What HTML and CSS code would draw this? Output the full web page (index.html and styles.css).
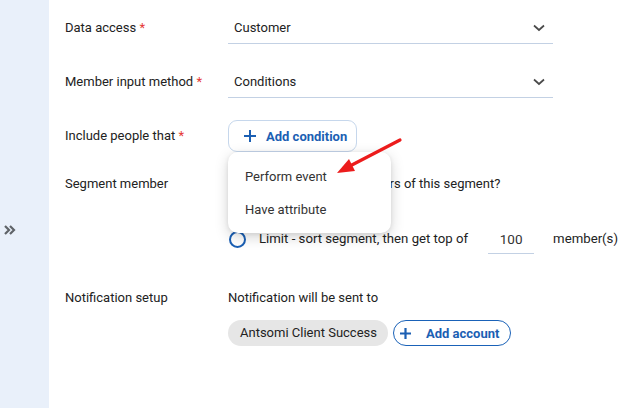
FILE: index.html
```html
<!DOCTYPE html>
<html>
<head>
<meta charset="utf-8">
<link rel="stylesheet" href="styles.css">
</head>
<body>
<div class="app">
  <aside class="sidebar">
    <svg class="expand" width="12" height="10" viewBox="0 0 12 10"><path d="M1 1l4 4-4 4M6 1l4 4-4 4" fill="none" stroke="#5f6368" stroke-width="2.2"/></svg>
  </aside>
  <main class="main">
    <div class="row">
      <div class="label">Data access <span class="req">*</span></div>
      <div class="select"><span>Customer</span><svg width="12" height="8" viewBox="0 0 12 8"><path d="M1 1.5l5 4.5 5-4.5" fill="none" stroke="#4a4a4a" stroke-width="1.7"/></svg></div>
    </div>
    <div class="row">
      <div class="label">Member input method <span class="req">*</span></div>
      <div class="select"><span>Conditions</span><svg width="12" height="8" viewBox="0 0 12 8"><path d="M1 1.5l5 4.5 5-4.5" fill="none" stroke="#4a4a4a" stroke-width="1.7"/></svg></div>
    </div>
    <div class="row">
      <div class="label">Include people that <span class="req">*</span></div>
      <div class="anchor">
        <button class="btn-cond"><svg width="12" height="12" viewBox="0 0 12 12"><path d="M6 0v12M0 6h12" stroke="#1b5fb3" stroke-width="2"/></svg><span>Add condition</span></button>
        <div class="menu">
          <div class="menu-item">Perform event</div>
          <div class="menu-item">Have attribute</div>
        </div>
      </div>
    </div>
    <div class="row row-seg">
      <div class="label">Segment member</div>
      <div class="seg">
        <div class="line">Do you want to limit members of this segment?</div>
        <div class="line radio-line"><span class="radio"></span></div>
        <div class="line radio-line limit"><span class="radio"></span><span>Limit - sort segment, then get top of</span><span class="num">100</span><span>member(s)</span></div>
      </div>
    </div>
    <div class="row row-notif">
      <div class="label">Notification setup</div>
      <div class="notif">
        <div class="line">Notification will be sent to</div>
        <div class="chips">
          <span class="chip">Antsomi Client Success</span>
          <button class="btn-acc"><svg width="11" height="11" viewBox="0 0 11 11"><path d="M5.5 0v11M0 5.5h11" stroke="#1b5fb3" stroke-width="2.2"/></svg><span>Add account</span></button>
        </div>
      </div>
    </div>
  </main>
</div>
<svg class="arrow" width="632" height="408" viewBox="0 0 632 408"><path d="M400 140L348 167" stroke="#ec1c1c" stroke-width="3.2" stroke-linecap="round"/><path d="M337 173L349 159L355 171Z" fill="#ec1c1c"/></svg>
</body>
</html>
```
FILE: styles.css
```css
* { box-sizing: border-box; }
html, body { margin: 0; padding: 0; background: #fff; }
body { font-family: Roboto, "Liberation Sans", sans-serif; font-size: 13px; color: #222; width: 632px; height: 408px; overflow: hidden; position: relative; }
.app { display: flex; height: 408px; }
.sidebar { width: 49px; flex: none; background: #e9f0fa; display: flex; align-items: flex-start; padding: 225px 0 0 4px; }
.expand { display: block; }
.main { flex: 1; padding: 12px 0 0 16px; display: flex; flex-direction: column; gap: 22px; }
.row { display: grid; grid-template-columns: 163px 325px; align-items: center; }
.label { line-height: 20px; }
.req { color: #e53935; }
.select { height: 32px; border-bottom: 1px solid #c3d1e4; display: flex; align-items: center; justify-content: space-between; padding: 0 8px 0 6px; }
.select svg { display: block; }
.anchor { position: relative; height: 32px; }
.btn-cond { height: 32px; width: 129px; border: 1px solid #c6d7ec; border-radius: 9px; background: #fff; display: flex; align-items: center; gap: 10px; padding: 0 0 0 15px; font: 700 13px Roboto, sans-serif; color: #1b5fb3; }
.btn-cond svg, .btn-acc svg { display: block; }
.menu { position: absolute; left: 0; top: 32px; width: 163px; padding: 8px 0 7px; background: #fff; border-radius: 10px; box-shadow: 0 4px 14px rgba(0,0,0,0.17), 0 1px 4px rgba(0,0,0,0.08); z-index: 5; }
.menu-item { height: 33px; line-height: 33px; padding-left: 17px; color: #333; }
.row-seg { align-items: start; }
.seg { display: flex; flex-direction: column; }
.line { line-height: 20px; white-space: nowrap; }
.radio-line { display: flex; align-items: center; margin-top: 7px; height: 20px; }
.radio-line > * { flex: none; }
.radio { width: 17px; height: 17px; border: 2px solid #1a5fb4; border-radius: 50%; margin: 0 13px 0 1px; }
.limit { margin-top: 3px; height: 30px; font-size: 13.2px; }
.num { width: 46px; height: 30px; line-height: 30px; text-align: center; border-bottom: 1px solid #c3d1e4; margin: 0 19px 0 20px; color: #333; font-size: 13.5px; }
.row-notif { align-items: start; margin-top: 12px; }
.notif { display: flex; flex-direction: column; }
.chips { display: flex; gap: 5px; margin-top: 12px; }
.chip { height: 26px; line-height: 26px; padding: 0 11px 0 12px; background: #e6e6e6; border-radius: 13px; white-space: nowrap; }
.btn-acc { height: 26px; border: 1px solid #1a62b8; border-radius: 13px; background: #fff; display: flex; align-items: center; gap: 15px; padding: 0 11px 0 6px; font: 700 13px Roboto, sans-serif; color: #1b5fb3; white-space: nowrap; }
.arrow { position: absolute; left: 0; top: 0; pointer-events: none; z-index: 10; }
```
